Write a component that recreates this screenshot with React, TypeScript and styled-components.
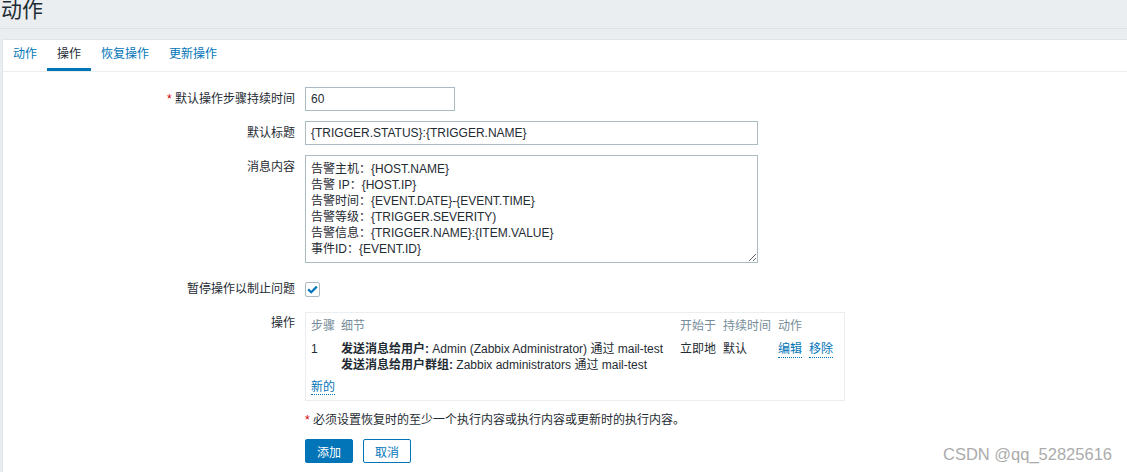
import styled, { createGlobalStyle } from "styled-components"

const GlobalStyle = createGlobalStyle`
    html, body {
        margin: 0;
        padding: 0;
        background: #ebeef0;
    }
    body {
        font-family: "Liberation Sans", Arial, "Noto Sans CJK SC", sans-serif;
        font-size: 12px;
        color: #1f2c33;
    }
`

const tabs = ["动作", "操作", "恢复操作", "更新操作"]

const messageText = [
    "告警主机：{HOST.NAME}",
    "告警 IP：{HOST.IP}",
    "告警时间：{EVENT.DATE}-{EVENT.TIME}",
    "告警等级：{TRIGGER.SEVERITY)",
    "告警信息：{TRIGGER.NAME}:{ITEM.VALUE}",
    "事件ID：{EVENT.ID}",
].join("\n")

export default function App() {
    return (
        <Page>
            <GlobalStyle />
            <Header>
                <Title>动作</Title>
            </Header>
            <Panel>
                <TabBar>
                    {tabs.map((t, i) => (
                        <Tab key={t} $active={i === 1}>{t}</Tab>
                    ))}
                </TabBar>
                <Form>
                    <Label><Req>*</Req> 默认操作步骤持续时间</Label>
                    <Field>
                        <Input $width={150} defaultValue="60" />
                    </Field>

                    <Label>默认标题</Label>
                    <Field>
                        <Input $width={453} defaultValue="{TRIGGER.STATUS}:{TRIGGER.NAME}" />
                    </Field>

                    <Label>消息内容</Label>
                    <Field>
                        <TextArea defaultValue={messageText} />
                    </Field>

                    <Label>暂停操作以制止问题</Label>
                    <Field>
                        <CheckBox>
                            <svg width="11" height="9" viewBox="0 0 11 9">
                                <polyline points="1.2,4.4 4.2,7.2 9.8,1.6" fill="none" stroke="#0275b8" strokeWidth="2.2" />
                            </svg>
                        </CheckBox>
                    </Field>

                    <Label>操作</Label>
                    <Field>
                        <OpsBox>
                            <OpsTable>
                                <colgroup>
                                    <col style={{ width: 30 }} />
                                    <col style={{ width: 339 }} />
                                    <col style={{ width: 43 }} />
                                    <col style={{ width: 55 }} />
                                    <col />
                                </colgroup>
                                <thead>
                                    <tr>
                                        <Th>步骤</Th>
                                        <Th>细节</Th>
                                        <Th>开始于</Th>
                                        <Th>持续时间</Th>
                                        <Th>动作</Th>
                                    </tr>
                                </thead>
                                <tbody>
                                    <tr>
                                        <Td>1</Td>
                                        <Td>
                                            <b>发送消息给用户:</b> Admin (Zabbix Administrator) 通过 mail-test<br />
                                            <b>发送消息给用户群组:</b> Zabbix administrators 通过 mail-test
                                        </Td>
                                        <Td>立即地</Td>
                                        <Td>默认</Td>
                                        <Td>
                                            <Actions>
                                                <Link>编辑</Link>
                                                <Link>移除</Link>
                                            </Actions>
                                        </Td>
                                    </tr>
                                </tbody>
                            </OpsTable>
                            <NewRow>
                                <Link>新的</Link>
                            </NewRow>
                        </OpsBox>
                    </Field>

                    <span />
                    <Note><Req>*</Req> 必须设置恢复时的至少一个执行内容或执行内容或更新时的执行内容。</Note>

                    <span />
                    <Buttons>
                        <Button $primary>添加</Button>
                        <Button>取消</Button>
                    </Buttons>
                </Form>
                <Watermark>CSDN @qq_52825616</Watermark>
            </Panel>
        </Page>
    )
}

const Page = styled.div`
    min-height: 100vh;
    display: flex;
    flex-direction: column;
`

const Header = styled.header`
    height: 28px;
    border-bottom: 1px solid #dde1e4;
    margin-bottom: 10px;
    overflow: hidden;
`

const Title = styled.h1`
    margin: 0 0 0 1px;
    font-size: 21px;
    line-height: 20px;
    font-weight: normal;
    color: #1f2c33;
`

const Panel = styled.main`
    position: relative;
    flex: 1;
    margin-left: 2px;
    background: #fff;
    border-top: 1px solid #dfe4e7;
    border-left: 1px solid #dfe4e7;
`

const TabBar = styled.nav`
    display: flex;
    height: 31px;
    border-bottom: 1px solid #ebeef0;
`

const Tab = styled.div<{ $active?: boolean }>`
    padding: 0 10px;
    line-height: 29px;
    color: ${(p) => (p.$active ? "#1f2c33" : "#0275b8")};
    border-bottom: 3px solid ${(p) => (p.$active ? "#0275b8" : "transparent")};
    height: 28px;
`

const Form = styled.div`
    display: grid;
    grid-template-columns: 292px 1fr;
    column-gap: 10px;
    row-gap: 10px;
    padding-top: 15px;
    align-items: start;
`

const Label = styled.div`
    text-align: right;
    line-height: 24px;
    white-space: nowrap;
`

const Req = styled.span`
    color: #d40000;
`

const Field = styled.div`
    min-height: 24px;
    display: flex;
    align-items: center;
`

const Input = styled.input<{ $width: number }>`
    box-sizing: border-box;
    width: ${(p) => p.$width}px;
    height: 24px;
    border: 1px solid #acbbc2;
    padding: 0 5px;
    font: 12px "Liberation Sans", Arial, "Noto Sans CJK SC", sans-serif;
    color: #1f2c33;
    outline: none;
`

const TextArea = styled.textarea`
    box-sizing: border-box;
    width: 453px;
    height: 108px;
    border: 1px solid #acbbc2;
    padding: 5px;
    font: 12px/16px "Liberation Sans", Arial, "Noto Sans CJK SC", sans-serif;
    color: #1f2c33;
    outline: none;
    margin-bottom: 4px;
`

const CheckBox = styled.span`
    box-sizing: border-box;
    width: 15px;
    height: 15px;
    border: 1px solid #acbbc2;
    border-radius: 2px;
    display: flex;
    align-items: center;
    justify-content: center;
    margin-top: 1px;
`

const OpsBox = styled.div`
    box-sizing: border-box;
    width: 540px;
    border: 1px solid #ebeef0;
    padding: 5px;
    margin-top: 1px;
`

const OpsTable = styled.table`
    border-collapse: collapse;
    width: 100%;
    table-layout: fixed;
`

const Th = styled.th`
    text-align: left;
    font-weight: normal;
    color: #768d99;
    line-height: 16px;
    padding: 0 0 7px 0;
    white-space: nowrap;
`

const Td = styled.td`
    line-height: 16px;
    vertical-align: top;
    padding: 0;
    white-space: nowrap;
    b {
        font-weight: bold;
    }
`

const Actions = styled.div`
    display: flex;
    gap: 7px;
`

const Link = styled.span`
    color: #0275b8;
    border-bottom: 1px dotted #0275b8;
`

const NewRow = styled.div`
    line-height: 16px;
    margin-top: 6px;
`

const Note = styled.div`
    line-height: 18px;
`

const Buttons = styled.div`
    display: flex;
    gap: 10px;
`

const Button = styled.button<{ $primary?: boolean }>`
    box-sizing: border-box;
    width: 48px;
    height: 24px;
    border: 1px solid #0275b8;
    border-radius: 2px;
    background: ${(p) => (p.$primary ? "#0275b8" : "#fff")};
    color: ${(p) => (p.$primary ? "#fff" : "#0275b8")};
    font: 12px "Liberation Sans", Arial, "Noto Sans CJK SC", sans-serif;
    padding: 0;
`

const Watermark = styled.div`
    position: absolute;
    right: 15px;
    bottom: 8px;
    font-size: 16.5px;
    color: #ababab;
    font-family: "Liberation Sans", Arial, sans-serif;
`
